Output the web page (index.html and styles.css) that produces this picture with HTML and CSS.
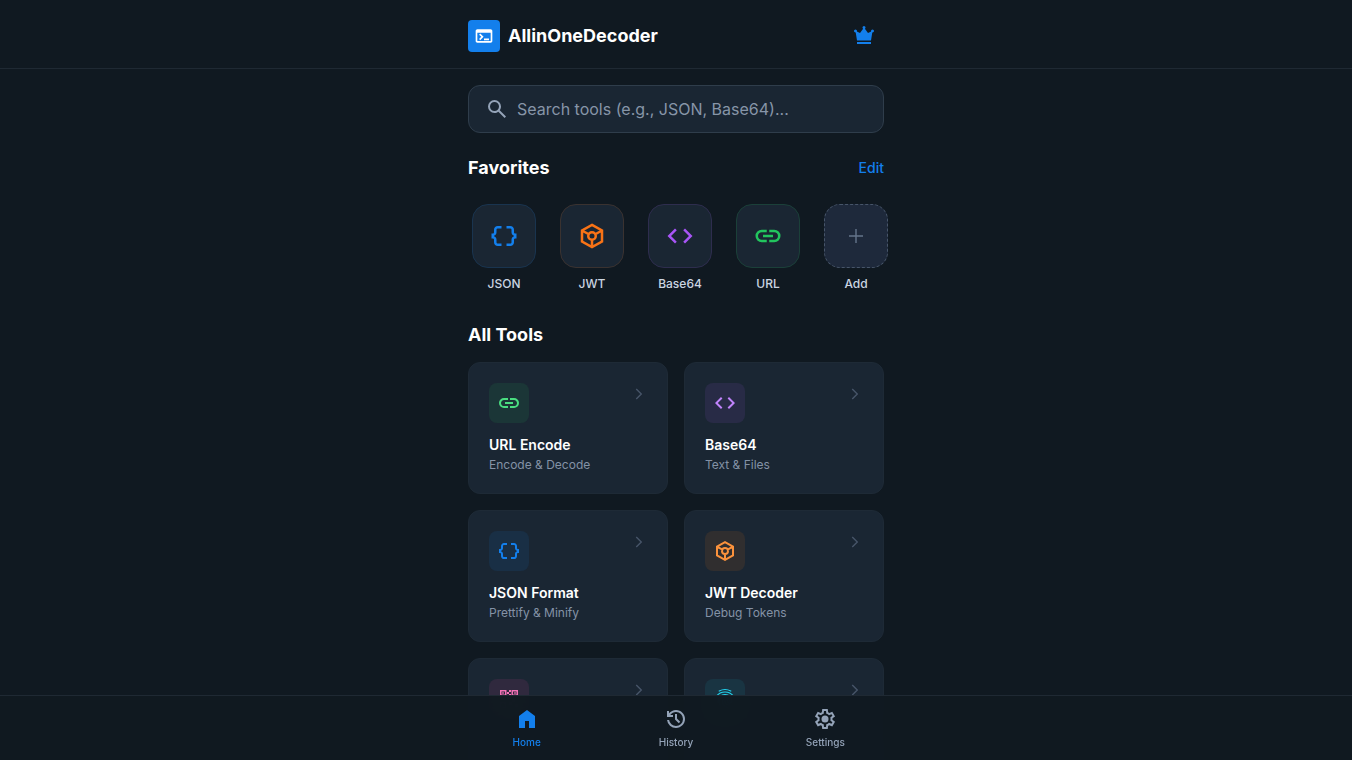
FILE: index.html
```html
<!DOCTYPE html>
<html lang="en">
<head>
<meta charset="utf-8">
<meta name="viewport" content="width=device-width, initial-scale=1">
<title>AllinOneDecoder</title>
<link rel="stylesheet" href="styles.css">
</head>
<body>
<svg class="sprite" aria-hidden="true">
  <symbol id="terminal" viewBox="0 0 24 24"><path d="M4 20q-.825 0-1.413-.588T2 18V6q0-.825.588-1.413T4 4h16q.825 0 1.413.588T22 6v12q0 .825-.588 1.413T20 20H4Zm0-2h16V8H4v10Zm3.5-1-1.4-1.4L8.675 13l-2.6-2.6L7.5 9l4 4-4 4Zm4.5 0v-2h6v2h-6Z"/></symbol>
  <symbol id="crown" viewBox="0 0 24 24"><path d="M5 20v-2h14v2H5Zm0-3.500L3.725 8.475q-.05 0-.113.013T3.500 8.500q-.625 0-1.062-.438T2 7t.438-1.062T3.500 5.500t1.063.438T5 7q0 .175-.038.325t-.087.275L8 9l3.125-4.275q-.275-.2-.45-.525t-.175-.7q0-.625.438-1.063T12 2t1.063.438T13.500 3.500q0 .375-.175.7t-.45.525L16 9l3.125-1.400q-.05-.125-.088-.275T19 7q0-.625.438-1.063T20.500 5.500t1.063.438T22 7t-.438 1.063T20.500 8.500q-.05 0-.113-.012t-.112-.013L19 16.500z"/></symbol>
  <symbol id="search" viewBox="0 0 24 24"><path d="m19.6 21-6.3-6.3q-.75.6-1.725.95T9.5 16q-2.725 0-4.613-1.888T3 9.5t1.888-4.613T9.5 3t4.613 1.888T16 9.5q0 1.1-.35 2.075T14.7 13.3l6.3 6.3-1.4 1.4ZM9.5 14q1.875 0 3.188-1.313T14 9.5t-1.313-3.188T9.5 5 6.313 6.313 5 9.5t1.313 3.188T9.5 14Z"/></symbol>
  <symbol id="braces" viewBox="0 0 24 24"><path d="M14 20v-2h3q.425 0 .713-.288T18 17v-2q0-.95.55-1.725t1.45-1.1v-.35q-.9-.325-1.45-1.1T18 9V7q0-.425-.288-.713T17 6h-3V4h3q1.25 0 2.125.875T20 7v2q0 .425.288.713T21 10h1v4h-1q-.425 0-.712.288T20 15v2q0 1.25-.875 2.125T17 20h-3Zm-7 0q-1.25 0-2.125-.875T4 17v-2q0-.425-.288-.712T3 14H2v-4h1q.425 0 .713-.288T4 9V7q0-1.25.875-2.125T7 4h3v2H7q-.425 0-.713.288T6 7v2q0 .95-.55 1.725T4 11.825v.35q.9.325 1.45 1.1T6 15v2q0 .425.288.713T7 18h3v2H7Z"/></symbol>
  <symbol id="token" viewBox="0 0 24 24"><path fill="none" stroke="currentColor" stroke-width="2" d="m12 3.15 8 4.45v8.8l-8 4.45-8-4.45V7.6zM4 7.6l5.4 3M20 7.6l-5.4 3M12 15v5.8M15 12a3 3 0 1 1-6 0 3 3 0 0 1 6 0z"/></symbol>
  <symbol id="code" viewBox="0 0 24 24"><path d="m8 18-6-6 6-6 1.425 1.425-4.6 4.6L9.4 16.6 8 18Zm8 0-1.425-1.425 4.6-4.6L14.6 7.4 16 6l6 6-6 6Z"/></symbol>
  <symbol id="link" viewBox="0 0 24 24"><path d="M11 17H7q-2.075 0-3.537-1.463T2 12t1.463-3.537T7 7h4v2H7q-1.25 0-2.125.875T4 12t.875 2.125T7 15h4v2Zm-3-4v-2h8v2H8Zm5 4v-2h4q1.25 0 2.125-.875T20 12t-.875-2.125T17 9h-4V7h4q2.075 0 3.538 1.463T22 12t-1.463 3.538T17 17h-4Z"/></symbol>
  <symbol id="plus" viewBox="0 0 24 24"><path d="M11.300 12.700H5v-1.400h6.300V5h1.400v6.300H19v1.400h-6.300V19h-1.400z"/></symbol>
  <symbol id="chevron" viewBox="0 0 24 24"><path fill="none" stroke="currentColor" stroke-width="1.500" d="m9 6.500 5.500 5.500L9 17.500"/></symbol>
  <symbol id="qr" viewBox="0 0 24 24"><path fill-rule="evenodd" d="M3 3h6.500v6H3zm1.500 1.500v3H8v-3zM14.500 3H21v6h-6.500zM16 4.500v3h3.500v-3zM3 15h6v6H3zm1.500 1.500v3h3v-3zM12 3h2v2h-2zM10 5h2v2h-2zM12 7h2v2h-2zM10 10h4v2h-4zM4 11h4v2H4zM15 12h3v3h-3zM12 15h3v3h-3zM18 17h3v4h-3z"/><path d="M5 5h2v2H5zM17 5h2v2h-2zM5 17h2v2H5z" opacity=".6"/></symbol>
  <symbol id="fingerprint" viewBox="0 0 24 24"><path fill="none" stroke="currentColor" stroke-width="1.200" stroke-linecap="round" d="M6.200 4q5.800-3 11.600 0M3.500 9.200q3.200-4.200 8.500-4.200t8.500 4.200M5 15v-1a7 6.500 0 0 1 14 0q0 2.200-2.200 2.200T14.600 14q0-2-2.600-2t-2.600 2q0 4.500 4.600 6.500M7.200 19q-3.500-8.500 4.800-8.900 4.900.4 4.900 3.900M12 14q0 4.300 5 4"/></symbol>
  <symbol id="home" viewBox="0 0 24 24"><path d="M4 21V9l8-6 8 6v12h-6v-7h-4v7z"/></symbol>
  <symbol id="history" viewBox="0 0 24 24"><path d="M12 21q-3.450 0-6.013-2.288T3.050 13H5.100q.35 2.600 2.313 4.300T12 19q2.925 0 4.963-2.038T19 12t-2.038-4.963T12 5q-1.725 0-3.225.8T6.250 8H9v2H3V4h2v2.350q1.275-1.600 3.113-2.475T12 3q1.875 0 3.513.713t2.850 1.924 1.925 2.850T21 12t-.713 3.513-1.924 2.850-2.850 1.925T12 21Zm2.800-4.800L11 12.400V7h2v4.600l3.200 3.200-1.400 1.400Z"/></symbol>
  <symbol id="settings" viewBox="0 0 24 24"><path d="m9.250 22-.4-3.200q-.325-.125-.612-.3t-.563-.375L4.700 19.375l-2.750-4.750 2.575-1.950Q4.500 12.500 4.500 12.337v-.675q0-.162.025-.337L1.950 9.375l2.750-4.750 2.975 1.250q.275-.2.575-.375t.6-.3l.4-3.200h5.500l.4 3.200q.325.125.613.3t.562.375l2.975-1.250 2.750 4.750-2.575 1.950q.025.175.025.337v.675q0 .163-.05.338l2.575 1.950-2.750 4.750-2.950-1.250q-.275.2-.575.375t-.6.3l-.4 3.200h-5.500ZM11 20h1.975l.35-2.650q.775-.2 1.438-.587t1.212-.938l2.475 1.025.975-1.700-2.150-1.625q.125-.35.175-.737T17.500 12t-.05-.787-.175-.738l2.150-1.625-.975-1.700-2.475 1.050q-.55-.575-1.212-.962t-1.438-.588L13 4h-1.975l-.35 2.650q-.775.2-1.437.588t-1.213.937L5.550 7.150l-.975 1.700 2.150 1.600q-.125.375-.175.750t-.05.8q0 .4.050.775t.175.750l-2.150 1.625.975 1.700 2.475-1.050q.55.575 1.213.963t1.437.587L11 20Z"/><circle cx="12" cy="12" r="3.500"/></symbol>
</svg>

<header class="topbar">
  <div class="shell topbar-row">
    <div class="brand">
      <span class="logo"><svg class="icon"><use href="#terminal"/></svg></span>
      <h1 class="brand-name">AllinOneDecoder</h1>
    </div>
    <button class="crown-button" type="button" aria-label="Premium"><svg class="icon"><use href="#crown"/></svg></button>
  </div>
</header>

<main class="shell content">
  <label class="search">
    <svg class="icon"><use href="#search"/></svg>
    <input class="search-input" type="text" aria-label="Search tools" placeholder="Search tools (e.g., JSON, Base64)...">
  </label>

  <section class="favorites">
    <div class="section-head">
      <h2 class="heading">Favorites</h2>
      <button class="edit" type="button">Edit</button>
    </div>
    <div class="favorite-list">
      <button class="favorite blue" type="button"><span class="tile"><svg class="icon"><use href="#braces"/></svg></span>JSON</button>
      <button class="favorite orange" type="button"><span class="tile"><svg class="icon"><use href="#token"/></svg></span>JWT</button>
      <button class="favorite purple" type="button"><span class="tile"><svg class="icon"><use href="#code"/></svg></span>Base64</button>
      <button class="favorite green" type="button"><span class="tile"><svg class="icon"><use href="#link"/></svg></span>URL</button>
      <button class="favorite add" type="button"><span class="tile"><svg class="icon"><use href="#plus"/></svg></span>Add</button>
    </div>
  </section>

  <section class="tools">
    <h2 class="heading">All Tools</h2>
    <div class="tool-grid">
      <a class="card" href="#url">
        <span class="card-top"><span class="badge badge-green"><svg class="icon"><use href="#link"/></svg></span><svg class="icon chevron"><use href="#chevron"/></svg></span>
        <span class="card-title">URL Encode</span><span class="card-note">Encode &amp; Decode</span>
      </a>
      <a class="card" href="#base64">
        <span class="card-top"><span class="badge badge-purple"><svg class="icon"><use href="#code"/></svg></span><svg class="icon chevron"><use href="#chevron"/></svg></span>
        <span class="card-title">Base64</span><span class="card-note">Text &amp; Files</span>
      </a>
      <a class="card" href="#json">
        <span class="card-top"><span class="badge badge-blue"><svg class="icon"><use href="#braces"/></svg></span><svg class="icon chevron"><use href="#chevron"/></svg></span>
        <span class="card-title">JSON Format</span><span class="card-note">Prettify &amp; Minify</span>
      </a>
      <a class="card" href="#jwt">
        <span class="card-top"><span class="badge badge-orange"><svg class="icon"><use href="#token"/></svg></span><svg class="icon chevron"><use href="#chevron"/></svg></span>
        <span class="card-title">JWT Decoder</span><span class="card-note">Debug Tokens</span>
      </a>
      <a class="card" href="#qr-code" aria-label="QR">
        <span class="card-top"><span class="badge badge-pink"><svg class="icon"><use href="#qr"/></svg></span><svg class="icon chevron"><use href="#chevron"/></svg></span>
      </a>
      <a class="card" href="#hash" aria-label="Hash">
        <span class="card-top"><span class="badge badge-cyan"><svg class="icon"><use href="#fingerprint"/></svg></span><svg class="icon chevron"><use href="#chevron"/></svg></span>
      </a>
    </div>
  </section>
</main>

<nav class="bottombar">
  <div class="tabs">
    <a class="tab active" href="#home-page"><svg class="icon"><use href="#home"/></svg>Home</a>
    <a class="tab" href="#history-page"><svg class="icon"><use href="#history"/></svg>History</a>
    <a class="tab" href="#settings-page"><svg class="icon"><use href="#settings"/></svg>Settings</a>
  </div>
</nav>
</body>
</html>
```
FILE: styles.css
```css
* { box-sizing: border-box; }

html { scrollbar-width: none; }

body {
  margin: 0;
  background: #101921;
  color: #fff;
  font-family: Inter, "Liberation Sans", sans-serif;
}

h1, h2 { margin: 0; }

button {
  border: 0;
  padding: 0;
  background: none;
  color: inherit;
  font: inherit;
  cursor: pointer;
}

a { color: inherit; text-decoration: none; }

.sprite { position: absolute; width: 0; height: 0; }

.icon { display: block; width: 24px; height: 24px; flex: none; fill: currentColor; }

.shell { max-width: 448px; margin: 0 auto; padding: 0 16px; }

.topbar {
  position: sticky;
  top: 0;
  z-index: 2;
  background: #101921;
  border-bottom: 1px solid #1f2933;
}

.topbar-row {
  display: flex;
  align-items: center;
  justify-content: space-between;
  padding: 16px 16px 12px;
}

.brand { display: flex; align-items: center; gap: 8px; }

.logo {
  display: grid;
  place-items: center;
  width: 32px;
  height: 32px;
  border-radius: 4px;
  background: #137fec;
}

.logo .icon { width: 20px; height: 20px; }

.brand-name { font-size: 18px; line-height: 24px; font-weight: 700; }

.crown-button {
  display: grid;
  place-items: center;
  width: 40px;
  height: 40px;
  color: #137fec;
}

.content { padding-top: 16px; padding-bottom: 96px; }

.search {
  display: flex;
  align-items: center;
  gap: 8px;
  height: 48px;
  padding: 0 16px;
  border: 1px solid #2f3d4b;
  border-radius: 12px;
  background: #1a2633;
  color: #94a3b8;
}

.search-input {
  flex: 1;
  min-width: 0;
  padding: 0;
  border: 0;
  outline: 0;
  background: none;
  color: #fff;
  font: inherit;
  font-size: 16px;
  line-height: 24px;
}

.search-input::placeholder { color: #8795a8; opacity: 1; }

.favorites { padding-top: 21px; }

.section-head { display: flex; align-items: center; justify-content: space-between; }

.heading { font-size: 18px; line-height: 28px; font-weight: 700; }

.edit { color: #137fec; font-size: 14px; line-height: 20px; font-weight: 500; }

.favorite-list {
  display: flex;
  gap: 16px;
  margin: 0 -16px;
  padding: 22px 16px 0;
  overflow-x: auto;
  scrollbar-width: none;
}

.favorite {
  display: flex;
  flex-direction: column;
  align-items: center;
  gap: 8px;
  flex: none;
  width: 72px;
  color: #cbd5e1;
  font-size: 12px;
  line-height: 16px;
  font-weight: 500;
}

.tile {
  display: grid;
  place-items: center;
  width: 64px;
  height: 64px;
  border: 1px solid;
  border-radius: 16px;
  background: #1a2633;
}

.tile .icon { width: 30px; height: 30px; }

.blue .tile { color: #137fec; border-color: #19344f; }
.orange .tile { color: #f97316; border-color: #3a3230; }
.purple .tile { color: #a855f7; border-color: #2e2d4e; }
.green .tile { color: #22c55e; border-color: #1b4039; }
.add .tile { color: #64748b; border: 1px dashed #475569; background: #1e293b; }
.add .icon { width: 24px; height: 24px; }

.tools { padding-top: 29px; }

.tool-grid {
  display: grid;
  grid-template-columns: repeat(2, minmax(0, 1fr));
  grid-auto-rows: 1fr;
  gap: 16px;
  padding-top: 13px;
}

.card {
  display: flex;
  flex-direction: column;
  padding: 20px;
  border: 1px solid #1e2a36;
  border-radius: 12px;
  background: #1a2633;
}

.card-top {
  display: flex;
  align-items: flex-start;
  justify-content: space-between;
  margin-right: -4px;
}

.badge {
  display: grid;
  place-items: center;
  width: 40px;
  height: 40px;
  border-radius: 8px;
}

.badge-green { color: #4ade80; background: #1b3637; }
.badge-purple { color: #c084fc; background: #282b46; }
.badge-blue { color: #137fec; background: #192f45; }
.badge-orange { color: #fb923c; background: #302e2f; }
.badge-pink { color: #f472b6; background: #30293e; }
.badge-cyan { color: #22d3ee; background: #193442; }

.chevron { height: 22px; color: #475569; }

.card-title { padding-top: 12px; font-size: 14px; line-height: 20px; font-weight: 600; }

.card-note { padding-top: 2px; color: #8492a6; font-size: 12px; line-height: 16px; }

.bottombar {
  position: fixed;
  inset: auto 0 0;
  z-index: 2;
  border-top: 1px solid #1f2933;
  background: rgb(16 25 33 / 98%);
  backdrop-filter: blur(12px);
}

.tabs { display: flex; max-width: 448px; margin: 0 auto; padding: 11px 0 10px; }

.tab {
  display: flex;
  flex: 1;
  flex-direction: column;
  align-items: center;
  gap: 4px;
  color: #94a3b8;
  font-size: 10px;
  line-height: 15px;
  font-weight: 500;
}

.active { color: #137fec; }
```
